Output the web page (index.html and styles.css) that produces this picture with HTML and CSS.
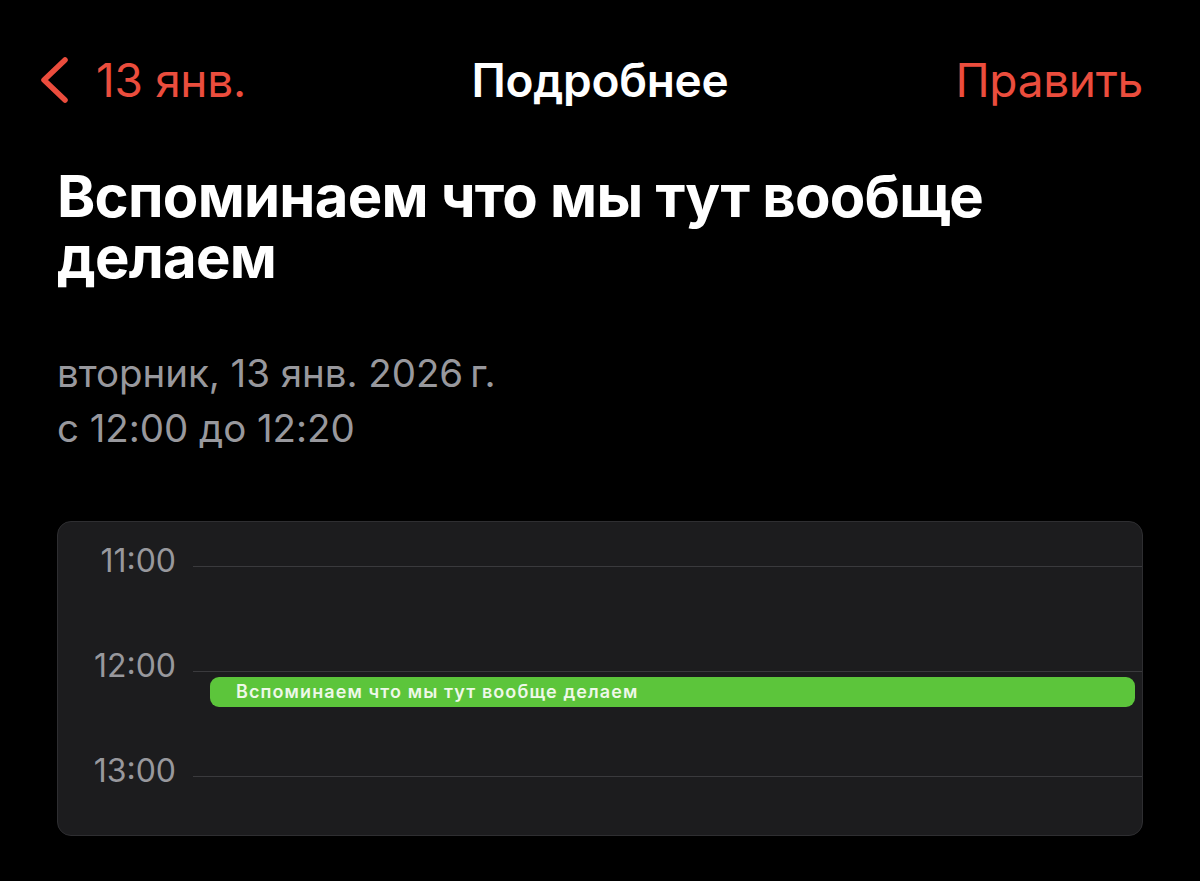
FILE: index.html
```html
<!DOCTYPE html>
<html lang="ru">
<head>
<meta charset="utf-8">
<title>Подробнее</title>
<link rel="stylesheet" href="styles.css">
</head>
<body>
<div class="screen">
  <header class="nav">
    <a class="nav-back">
      <svg class="chevron" viewBox="0 0 32 48" width="32" height="48" aria-hidden="true">
        <path d="M27 4 L6 24 L27 44" fill="none" stroke="currentColor" stroke-width="5.5" stroke-linecap="round" stroke-linejoin="round"/>
      </svg>
      <span>13 янв.</span>
    </a>
    <div class="nav-title">Подробнее</div>
    <a class="nav-edit">Править</a>
  </header>

  <h1 class="title">Вспоминаем что мы тут вообще делаем</h1>

  <div class="when">
    <div>вторник, 13 янв. 2026&#8239;г.</div>
    <div>с 12:00 до 12:20</div>
  </div>

  <section class="day">
    <div class="hour">
      <span class="hour-label">11:00</span>
      <span class="hour-line"></span>
    </div>
    <div class="hour">
      <span class="hour-label">12:00</span>
      <span class="hour-line"></span>
      <div class="event">Вспоминаем что мы тут вообще делаем</div>
    </div>
    <div class="hour">
      <span class="hour-label">13:00</span>
      <span class="hour-line"></span>
    </div>
  </section>
</div>
</body>
</html>
```

FILE: styles.css
```css
* { box-sizing: border-box; }
html, body {
  margin: 0;
  padding: 0;
  background: #000;
}
body {
  font-family: Inter, "Noto Sans", "DejaVu Sans", sans-serif;
  color: #fff;
  width: 1200px;
  height: 881px;
  overflow: hidden;
}
.screen {
  padding: 0 57px;
}
.nav {
  height: 160px;
  padding-top: 52px;
  display: grid;
  grid-template-columns: 1fr auto 1fr;
  align-items: center;
  align-content: start;
}
.nav > * { height: 56px; display: flex; align-items: center; }
.nav-back {
  color: #eb4d3d;
  font-size: 46px;
  gap: 26px;
  margin-left: -19px;
  letter-spacing: -0.3px;
}
.chevron { display: block; }
.nav-title {
  font-size: 46px;
  font-weight: 600;
  letter-spacing: -0.3px;
}
.nav-edit {
  color: #eb4d3d;
  font-size: 46px;
  justify-content: flex-end;
  letter-spacing: -0.3px;
}
.title {
  margin: 6px 0 0;
  font-size: 58px;
  font-weight: 700;
  line-height: 61px;
  letter-spacing: -0.75px;
  padding-right: 110px;
}
.when {
  margin-top: 58px;
  color: #98989d;
  font-size: 38.5px;
  line-height: 55px;
  letter-spacing: -0.05px;
}
.day {
  margin-top: 65px;
  background: #1c1c1e;
  border: 1px solid #2e2e31;
  border-radius: 14px;
  height: 315px;
  padding-top: 21px;
  overflow: hidden;
}
.hour {
  position: relative;
  height: 105px;
  display: flex;
  align-items: flex-start;
}
.hour-label {
  width: 118px;
  text-align: right;
  color: #98989d;
  font-size: 32px;
  line-height: 36px;
  letter-spacing: 0;
}
.hour-line {
  flex: 1;
  height: 1px;
  background: #3a3a3d;
  margin-left: 17px;
  margin-top: 23px;
}
.event {
  position: absolute;
  left: 152px;
  right: 7px;
  top: 29px;
  height: 30px;
  border-radius: 9px;
  background: #5cc53b;
  color: #eef8e8;
  font-size: 18px;
  font-weight: 600;
  line-height: 30px;
  padding-left: 26px;
  letter-spacing: 1.1px;
}
```
